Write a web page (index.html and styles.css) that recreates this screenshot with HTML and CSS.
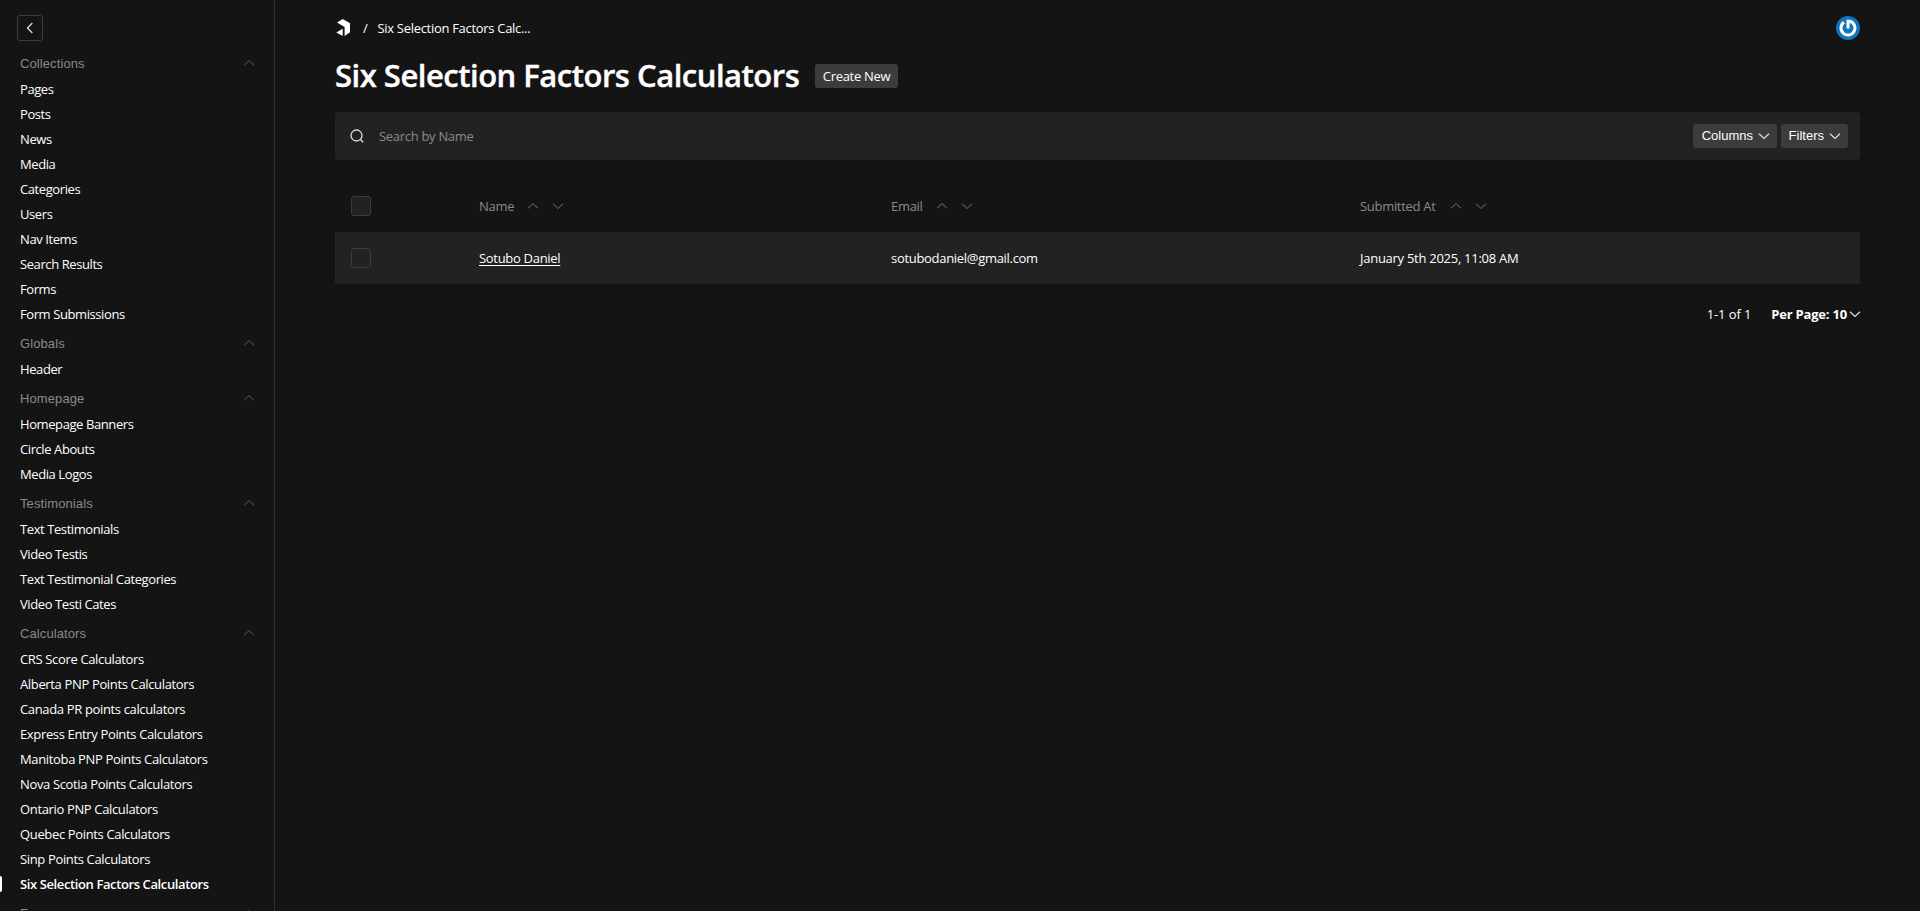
FILE: index.html
```html
<!DOCTYPE html>
<html lang="en">
<head>
<meta charset="utf-8">
<title>Six Selection Factors Calculators</title>
<link rel="stylesheet" href="styles.css">
</head>
<body>
<svg class="defs" aria-hidden="true">
  <symbol id="chev" viewBox="0 0 20 20"><path d="M5 7.7 10 12.5l5-4.8" fill="none" stroke="currentColor" stroke-width="1.25"/></symbol>
</svg>
<div class="layout">
  <aside class="nav">
    <button class="nav-toggle"><svg class="icon left"><use href="#chev"/></svg></button>
    <section class="group">
      <div class="label"><span>Collections</span><svg class="icon up"><use href="#chev"/></svg></div>
      <a>Pages</a><a>Posts</a><a>News</a><a>Media</a><a>Categories</a><a>Users</a><a>Nav Items</a><a>Search Results</a><a>Forms</a><a>Form Submissions</a>
    </section>
    <section class="group">
      <div class="label"><span>Globals</span><svg class="icon up"><use href="#chev"/></svg></div>
      <a>Header</a>
    </section>
    <section class="group">
      <div class="label"><span>Homepage</span><svg class="icon up"><use href="#chev"/></svg></div>
      <a>Homepage Banners</a><a>Circle Abouts</a><a>Media Logos</a>
    </section>
    <section class="group">
      <div class="label"><span>Testimonials</span><svg class="icon up"><use href="#chev"/></svg></div>
      <a>Text Testimonials</a><a>Video Testis</a><a>Text Testimonial Categories</a><a>Video Testi Cates</a>
    </section>
    <section class="group calculators">
      <div class="label"><span>Calculators</span><svg class="icon up"><use href="#chev"/></svg></div>
      <a>CRS Score Calculators</a><a>Alberta PNP Points Calculators</a><a>Canada PR points calculators</a><a>Express Entry Points Calculators</a><a>Manitoba PNP Points Calculators</a><a>Nova Scotia Points Calculators</a><a>Ontario PNP Calculators</a><a>Quebec Points Calculators</a><a>Sinp Points Calculators</a><a class="active">Six Selection Factors Calculators</a>
    </section>
    <section class="group">
      <div class="label"><span>Forms</span><svg class="icon up"><use href="#chev"/></svg></div>
    </section>
  </aside>
  <main class="main">
    <header class="topbar">
      <svg class="logo" viewBox="0 0 16 18"><path d="M6.8 0 14 4.2v9L8.6 17V8L1 3.6zM6.7 9.8V17L0.3 13.4z" fill="#fff"/></svg>
      <span class="slash">/</span>
      <span class="crumb">Six Selection Factors Calc...</span>
      <svg class="avatar" viewBox="0 0 24 24"><circle cx="12" cy="12" r="12" fill="#0f75bd"/><path d="M8 6.3A7 7 0 1 0 13.5 5.2H12v7.3" fill="none" stroke="#fff" stroke-width="3"/></svg>
    </header>
    <div class="title-row"><h1>Six Selection Factors Calculators</h1><button class="pill create">Create New</button></div>
    <div class="search">
      <svg class="icon search-icon" viewBox="0 0 20 20"><circle cx="9.5" cy="9.5" r="5.5" fill="none" stroke="currentColor" stroke-width="1.3"/><path d="m13.5 13.5 2.7 2.7" stroke="currentColor" stroke-width="1.3"/></svg>
      <span class="placeholder">Search by Name</span>
      <button class="pill columns">Columns<svg class="icon"><use href="#chev"/></svg></button>
      <button class="pill filters">Filters<svg class="icon"><use href="#chev"/></svg></button>
    </div>
    <div class="table">
      <div class="row head">
        <span class="check"></span>
        <div class="cell"><span>Name</span><svg class="icon up"><use href="#chev"/></svg><svg class="icon"><use href="#chev"/></svg></div>
        <div class="cell"><span>Email</span><svg class="icon up"><use href="#chev"/></svg><svg class="icon"><use href="#chev"/></svg></div>
        <div class="cell submitted"><span>Submitted At</span><svg class="icon up"><use href="#chev"/></svg><svg class="icon"><use href="#chev"/></svg></div>
      </div>
      <div class="row">
        <span class="check"></span>
        <div class="cell"><a class="name">Sotubo Daniel</a></div>
        <div class="cell">sotubodaniel@gmail.com</div>
        <div class="cell date">January 5th 2025, 11:08 AM</div>
      </div>
    </div>
    <footer class="pager"><span class="range">1-1 of 1</span><span class="per-page">Per Page: 10</span><svg class="icon"><use href="#chev"/></svg></footer>
  </main>
</div>
</body>
</html>
```
FILE: styles.css
```css
* { box-sizing: border-box; }
body {
  margin: 0;
  height: 911px;
  overflow: hidden;
  background: #141414;
  color: #fff;
  font: 13px/25px "Segoe UI", "Open Sans", "Noto Sans", sans-serif;
  letter-spacing: -0.3px;
}
button { font: inherit; letter-spacing: inherit; color: inherit; padding: 0; border: 0; }
.defs { position: absolute; width: 0; height: 0; }
.icon { width: 20px; height: 20px; flex: none; display: block; color: #ddd; }
.up { transform: rotate(180deg); }
.left { transform: rotate(90deg); }
.layout { display: flex; height: 911px; }

.nav { width: 275px; flex: none; border-right: 1px solid #2f2f2f; padding: 15px 15px 0 20px; overflow: hidden; letter-spacing: -0.41px; }
.nav-toggle {
  display: flex; align-items: center; justify-content: center;
  width: 26px; height: 26px; margin: 0 0 9px -3px;
  background: none; border: 1px solid #3c3c3c; border-radius: 3px;
}
.group { padding-bottom: 4px; }
.calculators { letter-spacing: -0.35px; }
.label {
  display: flex; align-items: center; justify-content: space-between;
  height: 26px; color: #8a8a8a; font-family: "Liberation Sans", Arial, sans-serif; letter-spacing: 0.1px;
}
.label .icon { color: #404040; }
.group a { display: block; height: 25px; line-height: 26px; white-space: nowrap; }
.group .active { font-weight: 600; letter-spacing: -0.39px; position: relative; }
.active::before { content: ""; position: absolute; left: -20px; top: 5px; width: 2px; height: 16px; background: #fff; border-radius: 0 2px 2px 0; }

.main { flex: 1; padding: 0 60px; }
.topbar { display: flex; align-items: center; height: 56px; }
.logo { width: 16px; height: 18px; margin-left: 1px; }
.slash { margin-left: 11px; }
.crumb { margin-left: 10px; }
.avatar { width: 24px; height: 24px; margin-left: auto; }
.title-row { display: flex; align-items: center; height: 40px; gap: 16px; }
h1 { margin: 0; width: 464px; font-size: 31px; line-height: 38px; padding-bottom: 2px; font-weight: 600; letter-spacing: -0.49px; white-space: nowrap; -webkit-text-stroke: 0.4px #fff; }
.pill { display: flex; align-items: center; justify-content: center; height: 24px; background: #3c3c3c; border-radius: 3px; flex: none; white-space: nowrap; }
.create { width: 83px; }
.search { display: flex; align-items: center; height: 48px; margin-top: 16px; padding: 0 12px; background: #222; border-radius: 4px; }
.placeholder { flex: 1; margin-left: 12px; color: #8a8a8a; letter-spacing: -0.3px; }
.columns, .filters { font-family: "Liberation Sans", Arial, sans-serif; letter-spacing: 0; line-height: 22px; justify-content: flex-end; padding: 0 3px 0 0; }
.columns { width: 84px; margin-right: 4px; }
.filters { width: 67px; }
.pill .icon { margin-left: 1px; }

.table { margin-top: 20px; }
.row { display: grid; grid-template-columns: 144px 412px 469px 1fr; align-items: center; height: 52px; background: #222; }
.head { background: none; color: #8a8a8a; }
.head .icon { color: #505050; margin-right: 5px; }
.head span + .icon { margin-left: 9px; }
.head .submitted span + .icon { margin-left: 10px; }
.cell { display: flex; align-items: center; white-space: nowrap; }
.date { letter-spacing: -0.27px; }
.check { width: 20px; height: 20px; margin-left: 16px; border: 1px solid #3c3c3c; border-radius: 3px; }
.head .check { background: #222; }
.name { text-decoration: underline; text-underline-offset: 2px; }
.pager { display: flex; align-items: center; justify-content: flex-end; height: 24px; margin-top: 18px; }
.range { letter-spacing: -0.1px; }
.per-page { font-weight: 700; letter-spacing: -0.2px; margin: 0 -2px 0 20px; }
.pager .icon { margin-right: -5px; }
```
